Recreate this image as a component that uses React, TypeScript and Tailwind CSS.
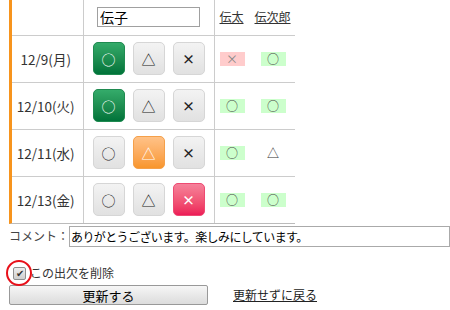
import React from "react";

type Mark = "o" | "t" | "x";

const rows: { date: string; pick: Mark; others: (Mark | null)[] }[] = [
  { date: "12/9(月)", pick: "o", others: ["x", "o"] },
  { date: "12/10(火)", pick: "o", others: ["o", "o"] },
  { date: "12/11(水)", pick: "t", others: ["o", "t"] },
  { date: "12/13(金)", pick: "x", others: ["o", "o"] },
];

const glyph: Record<Mark, string> = { o: "○", t: "△", x: "×" };

const ChoiceButton = ({ mark, active }: { mark: Mark; active: boolean }) => {
  let cls = "bg-gradient-to-b from-[#f3f3f3] to-[#e1e1e1] border-[#d6d6d6] text-[#222]";
  if (active && mark === "o") cls = "bg-gradient-to-b from-[#34ab6a] to-[#00733a] border-[#1f8a50] text-white";
  if (active && mark === "t") cls = "bg-gradient-to-b from-[#ffc287] to-[#f8962a] border-[#f5a04a] text-white";
  if (active && mark === "x") cls = "bg-gradient-to-b from-[#f5819a] to-[#ec1a58] border-[#ee4a72] text-white";
  return (
    <div className={`w-8 h-[33px] rounded-[5px] border flex items-center justify-center ${cls}`}>
      <span className={mark === "x" ? "text-[13px] font-bold leading-none" : "text-[14px] leading-none"}>{glyph[mark]}</span>
    </div>
  );
};

const Status = ({ mark }: { mark: Mark | null }) => {
  if (!mark) return <span className="w-[25px] h-[14px]" />;
  const bg = mark === "x" ? "bg-[#ffcccc] text-[#888]" : mark === "o" ? "bg-[#ccffcc] text-[#444]" : "text-[#333]";
  return (
    <span className={`w-[25px] h-[14px] flex items-center justify-center text-[12px] leading-none ${bg}`}>{glyph[mark]}</span>
  );
};

export default function App() {
  return (
    <div className="w-[450px] h-[310px] bg-white overflow-hidden text-[13px] leading-[16px] text-[#333] whitespace-nowrap" style={{ fontFamily: '"Noto Sans CJK JP", "Noto Sans", sans-serif' }}>
      <div className="ml-[9px] w-[286px] border-l-[3px] border-[#f7941d] border-b border-b-[#bbb]">
        <table className="border-collapse table-fixed w-[283px]">
          <colgroup>
            <col className="w-[71px]" />
            <col className="w-[131px]" />
            <col className="w-[81px]" />
          </colgroup>
          <tbody>
            <tr className="h-[35px] border-b border-[#ccc]">
              <td className="border-r border-[#ccc]" />
              <td className="border-r border-[#ccc]">
                <div className="flex justify-center">
                  <input
                    defaultValue="伝子"
                    className="w-[103px] h-[20px] border border-[#a0a0a0] px-[2px] text-[14px] text-black outline-none leading-[18px]"
                  />
                </div>
              </td>
              <td>
                <div className="flex gap-[11px] pl-[5px] text-[12px] text-[#333]">
                  <span className="underline">伝太</span>
                  <span className="underline">伝次郎</span>
                </div>
              </td>
            </tr>
            {rows.map((r, i) => (
              <tr key={i} className={`h-[47px] ${i < rows.length - 1 ? "border-b border-[#ccc]" : ""}`}>
                <td className="border-r border-[#ccc] text-center pr-[3px] text-[13.5px]">{r.date}</td>
                <td className="border-r border-[#ccc]">
                  <div className="flex gap-2 pl-[9px]">
                    {(["o", "t", "x"] as Mark[]).map((m) => (
                      <ChoiceButton key={m} mark={m} active={r.pick === m} />
                    ))}
                  </div>
                </td>
                <td>
                  <div className="flex gap-4 pl-[5px]">
                    {r.others.map((m, j) => (
                      <Status key={j} mark={m} />
                    ))}
                  </div>
                </td>
              </tr>
            ))}
          </tbody>
        </table>
      </div>
      <div className="flex items-center h-[22px] mt-[1px] ml-[9px]">
        <span className="w-[60px] text-[12px] text-[#444]">コメント：</span>
        <input
          defaultValue="ありがとうございます。楽しみにしています。"
          className="w-[400px] h-[21px] border border-[#aaa] px-[1px] text-[12px] tracking-[-0.6px] text-black outline-none"
        />
      </div>
      <div className="relative flex items-center mt-[19px] ml-[13px] h-[14px]">
        <span className="w-[13px] h-[13px] border border-[#8f8f8f] rounded-[2px] bg-gradient-to-b from-[#eee] to-[#cfcfcf] flex items-center justify-center text-[10px] leading-none text-[#333]">
          ✔
        </span>
        <span className="ml-[4px] text-[12px] text-[#333]">この出欠を削除</span>
        <div className="absolute left-[-7px] top-[-6px] w-[26px] h-[26px] rounded-full border-2 border-[#e8101a]" />
      </div>
      <div className="flex items-center mt-[5px] ml-[9px]">
        <button className="w-[199px] h-[20px] border border-[#999] rounded-[2px] bg-gradient-to-b from-[#f6f6f6] to-[#dcdcdc] text-[13px] text-black leading-none">
          更新する
        </button>
        <a className="ml-[25px] underline text-[12px] text-[#222]">更新せずに戻る</a>
      </div>
    </div>
  );
}
